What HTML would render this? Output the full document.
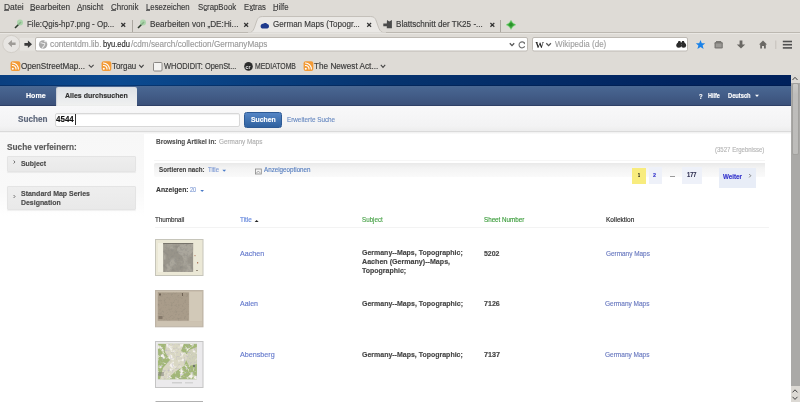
<!DOCTYPE html>
<html><head><meta charset="utf-8">
<style>
*{margin:0;padding:0;box-sizing:border-box}
html,body{width:800px;height:402px;overflow:hidden;background:#fff;font-family:"Liberation Sans",sans-serif}
.a{position:absolute}
#w{position:absolute;left:0;top:0;width:800px;height:402px;filter:blur(0.3px)}
.t{position:absolute;white-space:nowrap;line-height:1;transform-origin:0 0;-webkit-text-stroke:0.15px currentColor}
</style></head><body><div id="w">
<!-- chrome background -->
<div class="a" style="left:0;top:0;width:800px;height:75px;background:#dedbd6"></div>
<!-- accel underlines --><div class="a" style="left:4px;top:10.4px;width:4.5px;height:0.8px;background:#666"></div><div class="a" style="left:30px;top:10.4px;width:4.5px;height:0.8px;background:#666"></div><div class="a" style="left:77px;top:10.4px;width:4.5px;height:0.8px;background:#666"></div><div class="a" style="left:111px;top:10.4px;width:4.5px;height:0.8px;background:#666"></div><div class="a" style="left:146px;top:10.4px;width:3.5px;height:0.8px;background:#666"></div><div class="a" style="left:203.5px;top:10.4px;width:3.0px;height:0.8px;background:#666"></div><div class="a" style="left:250px;top:10.4px;width:3.0px;height:0.8px;background:#666"></div><div class="a" style="left:273px;top:10.4px;width:4.0px;height:0.8px;background:#666"></div>
<!-- tab strip bottom line -->
<div class="a" style="left:0;top:32px;width:800px;height:1px;background:#bcb8b1"></div>
<div class="a" style="left:0;top:33px;width:800px;height:1px;background:#e9e7e3"></div>
<!-- active tab -->
<svg class="a" style="left:248px;top:15px" width="138" height="19" viewBox="0 0 138 19">
  <path d="M0 18 C5 18 6 14 8 8 C10 2 11 1.5 16 1.5 L121 1.5 C126 1.5 127 2 129 8 C131 14 132 18 138 18 Z" fill="#eae8e5" stroke="#c4c0ba" stroke-width="1"/>
  <rect x="0" y="17.5" width="138" height="1.5" fill="#e6e4e0"/>
</svg>
<!-- tab separators -->
<div class="a" style="left:132px;top:20px;width:1px;height:12px;background:#aaa69f"></div>
<div class="a" style="left:500px;top:20px;width:1px;height:12px;background:#aaa69f"></div>
<!-- close x -->
<svg class="a" style="left:0;top:0" width="520" height="32">
  <g stroke="#333" stroke-width="1.2" stroke-linecap="butt">
    <path d="M121.3 23 L125.2 26.8 M125.2 23 L121.3 26.8"/>
    <path d="M244.2 23 L248.1 26.8 M248.1 23 L244.2 26.8"/>
    <path d="M367.2 23 L371.1 26.8 M371.1 23 L367.2 26.8"/>
    <path d="M490.4 23 L494.3 26.8 M494.3 23 L490.4 26.8"/>
  </g>
  <!-- tab icons -->
  <g>
    <path d="M15 28 L21 22" stroke="#2d3b2d" stroke-width="1.6"/>
    <circle cx="20" cy="22.5" r="3" fill="#9fd3a0" opacity="0.8"/>
    <path d="M138 28 L144 22" stroke="#2d3b2d" stroke-width="1.6"/>
    <circle cx="143" cy="22.5" r="3" fill="#9fd3a0" opacity="0.8"/>
    <path d="M260.6 26.2 C260.6 24.6 261.8 23.6 263.2 23.8 C264 22.6 266.4 22.6 267.2 24 C268.4 24.2 269.1 25.2 269 26.4 C268.9 27.8 267.8 28.5 266.4 28.5 L263 28.5 C261.6 28.5 260.6 27.6 260.6 26.2 Z" fill="#1e3a8c"/>
    <path d="M387 20 L389.3 21.6 L391.9 20 L391.9 28.2 L386.8 28.2 L386.8 26.2 L383.3 26.2 L383.3 23.6 L386.8 23.6 Z" fill="#4a4a4a"/>
    <path d="M511 20.3 L512.9 23 L515.9 24.8 L512.9 26.6 L511 29.4 L509.1 26.6 L506.1 24.8 L509.1 23 Z" fill="#3fae3f" stroke="#8fdc8f" stroke-width="0.6"/><circle cx="511" cy="24.8" r="1.8" fill="#2c8f2c"/>
  </g>
</svg>
<!-- nav toolbar -->
<svg class="a" style="left:0;top:32px" width="800" height="24">
  <circle cx="11.3" cy="12" r="8.6" fill="#e7e5e2" stroke="#d2cec8" stroke-width="1"/>
  <path d="M8 11.6 L11.9 8.1 L11.9 10.4 L15.6 10.4 L15.6 12.9 L11.9 12.9 L11.9 15.2 Z" fill="#9e9b97"/>
  <rect x="20" y="6" width="16" height="12.6" fill="#e6e4e0"/>
  <path d="M24.4 10.9 L27.9 10.9 L27.9 8.6 L32 12.3 L27.9 16 L27.9 13.8 L24.4 13.8 Z" fill="#3a3a3a"/>
  <rect x="35.5" y="5.5" width="492" height="13.5" rx="1.5" fill="#fff" stroke="#bdb9b3"/>
  <circle cx="43.1" cy="12.5" r="4.2" fill="#a9a9a9"/>
  <path d="M40.5 11 C42 10 43 12 44.5 11.5 C45.5 12.5 44 14 43 15 L42 16.5 M44 9 L46.5 10" stroke="#e8e8e8" stroke-width="1.1" fill="none"/>
  <path d="M509.8 11.2 L512 13.6 L514.2 11.2" stroke="#555" stroke-width="1.3" fill="none"/>
  <path d="M524.6 11.3 A3 3 0 1 0 524.7 14.3" stroke="#707070" stroke-width="1.1" fill="none"/><path d="M522.6 10.2 L525 10.4 L525 12.6 Z" fill="#707070"/>
  <rect x="532.5" y="5.5" width="155" height="13.5" rx="1.5" fill="#fff" stroke="#bdb9b3"/>
  <text x="535.3" y="15.8" font-family="Liberation Serif" font-size="8.6" font-weight="bold" fill="#2a2a2a" transform="translate(535.3 0) scale(1.02 1) translate(-535.3 0)">W</text>
  <path d="M546.3 11.2 L548.6 13.6 L550.9 11.2" stroke="#555" stroke-width="1.3" fill="none"/>
  <circle cx="678.8" cy="13.2" r="2.5" fill="#2b2b2b"/><circle cx="683.6" cy="13.2" r="2.5" fill="#2b2b2b"/><path d="M677.3 12 L678.5 9 L680.3 9 L680.8 10.5 L681.6 10.5 L682.1 9 L683.9 9 L685.1 12 Z" fill="#2b2b2b"/>
  <path d="M700.5 8 L701.8 11.2 L705.2 11.3 L702.6 13.4 L703.6 16.9 L700.5 14.9 L697.4 16.9 L698.4 13.4 L695.8 11.3 L699.2 11.2 Z" fill="#1a82e8"/>
  <rect x="714.5" y="10" width="8.3" height="6.5" rx="1.2" fill="#7a7874"/>
  <rect x="716" y="9" width="5.2" height="2" fill="#7a7874"/>
  <rect x="715.8" y="11.5" width="5.8" height="3.8" fill="#9b9995"/>
  <path d="M739.6 8.5 L742.4 8.5 L742.4 12.5 L745.2 12.5 L741 16.6 L736.8 12.5 L739.6 12.5 Z" fill="#6a6864"/>
  <path d="M759 12.6 L763 8.6 L767 12.6 L765.8 12.6 L765.8 16.5 L764 16.5 L764 14 L762 14 L762 16.5 L760.2 16.5 L760.2 12.6 Z" fill="#6a6864"/>
  <rect x="775.3" y="8.5" width="1" height="8.5" fill="#c5c1bb"/>
  <rect x="782.8" y="8.7" width="9.2" height="1.6" fill="#505050"/>
  <rect x="782.8" y="11.9" width="9.2" height="1.6" fill="#505050"/>
  <rect x="782.8" y="15.1" width="9.2" height="1.6" fill="#505050"/>
</svg>
<!-- bookmarks toolbar -->
<svg class="a" style="left:0;top:56px" width="400" height="19">
  <g id="rss">
    <rect x="10.6" y="5.3" width="9.7" height="9.7" rx="2" fill="#f39a35"/>
    <circle cx="12.8" cy="12.8" r="1" fill="#fff"/>
    <path d="M12 9.5 A3.5 3.5 0 0 1 16 13.5 M12 7 A6 6 0 0 1 18.4 13.5" stroke="#fff" stroke-width="1.1" fill="none"/>
  </g>
  <use href="#rss" x="91"/>
  <use href="#rss" x="293"/>
  <path d="M88.8 8.8 L91.2 11.3 L93.6 8.8" stroke="#444" stroke-width="1.1" fill="none"/>
  <path d="M139.2 8.8 L141.4 11.3 L143.6 8.8" stroke="#444" stroke-width="1.1" fill="none"/>
  <path d="M380.8 8.8 L383 11.3 L385.2 8.8" stroke="#444" stroke-width="1.1" fill="none"/>
  <rect x="153.5" y="6.5" width="8.5" height="8.5" rx="1" fill="#f4f3f1" stroke="#8a8784"/>
  <circle cx="248.5" cy="10.4" r="4.3" fill="#2c2c2c"/>
  <text x="245.6" y="12.5" font-family="Liberation Sans" font-size="5.2" font-weight="bold" fill="#e8e8e8">cr</text>
</svg>
<!-- page -->
<div class="a" style="left:0;top:75px;width:791px;height:327px;background:#fff"></div>
<div class="a" style="left:0;top:75px;width:791px;height:11px;background:linear-gradient(90deg,#0a3f80 0%,#0b4a90 15%,#06336e 50%,#012460 85%,#00215c 100%)"></div>
<div class="a" style="left:0;top:85px;width:791px;height:1px;background:rgba(0,20,60,0.35)"></div>
<div class="a" style="left:0;top:86px;width:791px;height:20px;background:linear-gradient(#4a6893,#425c87 50%,#3a4f78)"></div>
<div class="a" style="left:0;top:105px;width:791px;height:1px;background:#2f4066"></div>
<!-- search strip -->
<div class="a" style="left:0;top:106px;width:791px;height:25px;background:linear-gradient(#f8f8f9 0%,#f3f3f4 80%,#ededed 100%)"></div>
<div class="a" style="left:0;top:131px;width:791px;height:1px;background:#dadada"></div>
<div class="a" style="left:0;top:132px;width:791px;height:2px;background:linear-gradient(#efefef,#fcfcfc)"></div>
<!-- active nav tab -->
<div class="a" style="left:56.3px;top:87.4px;width:80.7px;height:19px;background:linear-gradient(#dde1e6,#e9ebed 60%,#f0f1f0);border-radius:2px 2px 0 0;box-shadow:inset 1px 0 1px rgba(120,130,150,0.25)"></div>
<!-- input -->
<div class="a" style="left:54.7px;top:112.7px;width:185px;height:14.5px;background:#fff;border:1px solid #d8d8d8;border-radius:2px;box-shadow:inset 0 1px 1px rgba(0,0,0,0.06)"></div>
<div class="a" style="left:75px;top:114.3px;width:0.8px;height:10.7px;background:#333"></div>
<!-- button -->
<div class="a" style="left:244px;top:112.2px;width:38.2px;height:15.5px;background:linear-gradient(#5485c5,#2f619f);border:1px solid #2d5a95;border-radius:2.5px"></div>
<!-- sidebar -->
<div class="a" style="left:0;top:134px;width:144px;height:82px;background:linear-gradient(#f7f7f7,#f9f9f9 70%,#fff)"></div>
<div class="a" style="left:6.7px;top:156px;width:129px;height:16px;background:linear-gradient(#eeeeee,#e9e9e9);border:1px solid #e4e4e4;border-radius:1px;box-shadow:0 1px 1px rgba(0,0,0,0.06)"></div>
<div class="a" style="left:6.7px;top:185.7px;width:129px;height:24.6px;background:linear-gradient(#eeeeee,#e9e9e9);border:1px solid #e4e4e4;border-radius:1px;box-shadow:0 1px 1px rgba(0,0,0,0.06)"></div>
<svg class="a" style="left:0;top:150px" width="30" height="60">
  <path d="M13.6 10.5 L15 12 L13.6 13.5" stroke="#666" stroke-width="0.9" fill="none"/>
  <path d="M13.6 45 L15 46.5 L13.6 48" stroke="#666" stroke-width="0.9" fill="none"/>
</svg>
<!-- sort bar -->
<div class="a" style="left:154px;top:159.6px;width:611px;height:1px;background:#f6f6f6"></div>
<div class="a" style="left:154px;top:162.5px;width:611px;height:14px;background:linear-gradient(#e9e9e9,#f3f3f3 35%,#fafafa);border-radius:2px 0 0 2px"></div>
<svg class="a" style="left:0;top:160px" width="800" height="40">
  <path d="M222.3 9.7 L226.1 9.7 L224.2 11.8 Z" fill="#4a7bc8"/>
  <path d="M200.3 30 L204 30 L202.15 32 Z" fill="#4a7bc8"/>
  <rect x="255.5" y="9" width="5.8" height="5" fill="#f4f4f4" stroke="#888" stroke-width="0.8"/>
  <path d="M256.5 13 L258.3 11 L260.3 13" stroke="#888" stroke-width="0.7" fill="none"/>
</svg>
<!-- pager -->
<div class="a" style="left:632px;top:167.7px;width:13.8px;height:16px;background:#f8ec7e"></div>
<div class="a" style="left:648.6px;top:167.4px;width:13.2px;height:16.2px;background:#eef1f9"></div>
<div class="a" style="left:682px;top:167px;width:20px;height:16.6px;background:#eef1f9"></div>
<div class="a" style="left:718.7px;top:167.9px;width:37.3px;height:19.8px;background:#e8edf7"></div>
<div class="a" style="left:669.7px;top:176.2px;width:5.3px;height:0.8px;background:#9a9a9a"></div>
<svg class="a" style="left:740px;top:170px" width="20" height="12">
  <path d="M9.2 4 L10.8 5.7 L9.2 7.4" stroke="#777" stroke-width="0.9" fill="none"/>
</svg>
<!-- table header -->
<svg class="a" style="left:250px;top:215px" width="12" height="10">
  <path d="M4.6 7 L8.6 7 L6.6 4.9 Z" fill="#222"/>
</svg>
<div class="a" style="left:155px;top:226.5px;width:614px;height:1px;background:#f3f3f3"></div>
<svg class="a" style="left:750px;top:90px" width="12" height="10"><path d="M5 4.8 L9 4.8 L7 6.9 Z" fill="#fff"/></svg>
<!-- thumbnails -->
<svg class="a" style="left:150px;top:236px" width="60" height="166" viewBox="150 236 60 166">
  <defs>
    <filter id="n1" x="0" y="0" width="100%" height="100%">
      <feTurbulence type="fractalNoise" baseFrequency="0.35" numOctaves="2" seed="3"/>
      <feColorMatrix values="0 0 0 0 0.25  0 0 0 0 0.24  0 0 0 0 0.22  1.6 0 0 0 -0.75"/>
      <feComposite in2="SourceGraphic" operator="in"/>
    </filter>
    <filter id="n2" x="0" y="0" width="100%" height="100%">
      <feTurbulence type="fractalNoise" baseFrequency="0.45" numOctaves="2" seed="7"/>
      <feColorMatrix values="0 0 0 0 0.3  0 0 0 0 0.26  0 0 0 0 0.2  1.8 0 0 0 -0.9"/>
      <feComposite in2="SourceGraphic" operator="in"/>
    </filter>
    <filter id="n3" x="0" y="0" width="100%" height="100%">
      <feTurbulence type="fractalNoise" baseFrequency="0.5" numOctaves="2" seed="11"/>
      <feColorMatrix values="0 0 0 0 0.45  0 0 0 0 0.42  0 0 0 0 0.55  1.8 0 0 0 -0.95"/>
      <feComposite in2="SourceGraphic" operator="in"/>
    </filter>
    <filter id="g3" x="0" y="0" width="100%" height="100%">
      <feTurbulence type="fractalNoise" baseFrequency="0.2" numOctaves="3" seed="5"/>
      <feColorMatrix values="0 0 0 0 0.9  0 0 0 0 0.88  0 0 0 0 0.84  5 0 0 0 -2.6"/>
      <feComposite in2="SourceGraphic" operator="in"/>
    </filter>
    <filter id="g1" x="0" y="0" width="100%" height="100%">
      <feTurbulence type="fractalNoise" baseFrequency="0.12" numOctaves="3" seed="9"/>
      <feColorMatrix values="0 0 0 0 0.40  0 0 0 0 0.38  0 0 0 0 0.33  4 0 0 0 -1.7"/>
      <feComposite in2="SourceGraphic" operator="in"/>
    </filter>
  </defs>
  <!-- thumb 1 -->
  <rect x="155.5" y="239.5" width="47.5" height="36" fill="#ebe8d6" stroke="#c6c5ba"/>
  <path d="M158 243 L163 243 L163 272 L158 272 Z" fill="#f2f0e2"/>
  <rect x="163.2" y="243" width="29.9" height="28.9" fill="#98948a"/>
  <ellipse cx="185" cy="250" rx="8" ry="6" fill="#b3afa5" opacity="0.7"/>
  <rect x="163.2" y="243" width="29.9" height="28.9" fill="#000" filter="url(#g1)"/>
  <rect x="163.2" y="243" width="29.9" height="28.9" fill="#000" filter="url(#n1)"/>
  <rect x="163.2" y="243" width="29.9" height="0.8" fill="#6f6b63"/>
  <rect x="194.5" y="255" width="1" height="1.2" fill="#b07a60"/>
  <rect x="197" y="262" width="1.2" height="1.5" fill="#b07a60"/>
  <rect x="196" y="270" width="2" height="1" fill="#9a9080"/>
  <!-- thumb 2 -->
  <rect x="155.5" y="290.5" width="47.5" height="36.3" fill="#cabfae" stroke="#bdb3a5"/>
  <rect x="189.5" y="292" width="12.5" height="29" fill="#d2c9b8"/>
  <rect x="157.8" y="292.4" width="31.1" height="28.3" fill="#a99c8a"/>
  <rect x="157.8" y="292.4" width="31.1" height="28.3" fill="#000" filter="url(#n2)"/>
  <rect x="159" y="293.5" width="2" height="2" fill="#6f6355"/>
  <rect x="182" y="293" width="1" height="3" fill="#6f6355"/>
  <rect x="158.5" y="316" width="4" height="3" fill="#85796a"/>
  <rect x="157" y="321.5" width="45" height="4.5" fill="#cdc3b2"/>
  <!-- thumb 3 -->
  <rect x="155.5" y="341.5" width="47.5" height="46" fill="#ebeaec" stroke="#c4c4c4"/>
  <rect x="157.9" y="343.8" width="39" height="35.5" fill="#a2b777"/>
  <path d="M166 343.8 L184 343.8 L181 351 L188 355 L184 366 L175 372 L167 379.3 L160 379.3 L163 368 L170 360 L165 352 Z" fill="#e3ddd0" opacity="0.85"/>
  <path d="M189 350 L196.9 347 L196.9 364 L189 366 L185 358 Z" fill="#dcd7cb" opacity="0.8"/>
  <rect x="157.9" y="343.8" width="39" height="35.5" fill="#000" filter="url(#g3)"/>
  <rect x="157.9" y="343.8" width="39" height="35.5" fill="#000" filter="url(#n3)"/>
  <rect x="158" y="372" width="6" height="4" fill="#7a7a72" opacity="0.5"/>
  <rect x="193" y="365" width="2" height="2" fill="#5a5a6a" opacity="0.7"/>
  <rect x="172" y="382" width="10" height="1.5" fill="#cfcfcf"/>
  <rect x="185" y="382" width="8" height="1.5" fill="#d4d4d4"/>
  <rect x="155.5" y="401" width="47.5" height="1" fill="#b0b0b0"/>
</svg>
<!-- scrollbar -->
<div class="a" style="left:790.5px;top:75px;width:9.5px;height:327px;background:#dcd9d4"></div>
<div class="a" style="left:791px;top:83px;width:9px;height:302.6px;background:#aaa9a7"></div>
<div class="a" style="left:791.5px;top:83.2px;width:7.5px;height:72px;background:linear-gradient(#cac9c6,#bebdbb 15%,#bdbcba);border:1px solid #a2a19e;border-radius:2px"></div>
<svg class="a" style="left:788px;top:75px" width="12" height="327">
  <path d="M4.5 5 L7 2.3 L9.5 5" stroke="#444" stroke-width="1" fill="none"/>
  <path d="M4.5 317.4 L7 314.8 L9.5 317.4" stroke="#444" stroke-width="1" fill="none"/>
  <path d="M4.5 321.8 L7 324.4 L9.5 321.8" stroke="#444" stroke-width="1" fill="none"/>
</svg>

<div class="t" style="left:3.75px;top:3.00px;font-size:8.3px;font-weight:normal;color:#3b3b3b;transform:scaleX(1.0184);">Datei</div><div class="t" style="left:30.00px;top:3.00px;font-size:8.3px;font-weight:normal;color:#3b3b3b;transform:scaleX(1.0000);">Bearbeiten</div><div class="t" style="left:77.00px;top:3.00px;font-size:8.3px;font-weight:normal;color:#3b3b3b;transform:scaleX(0.9643);">Ansicht</div><div class="t" style="left:111.00px;top:3.00px;font-size:8.3px;font-weight:normal;color:#3b3b3b;transform:scaleX(0.9569);">Chronik</div><div class="t" style="left:146.00px;top:3.00px;font-size:8.3px;font-weight:normal;color:#3b3b3b;transform:scaleX(0.9362);">Lesezeichen</div><div class="t" style="left:197.50px;top:3.00px;font-size:8.3px;font-weight:normal;color:#3b3b3b;transform:scaleX(0.9390);">ScrapBook</div><div class="t" style="left:243.75px;top:3.00px;font-size:8.3px;font-weight:normal;color:#3b3b3b;transform:scaleX(0.9271);">Extras</div><div class="t" style="left:273.00px;top:3.00px;font-size:8.3px;font-weight:normal;color:#3b3b3b;transform:scaleX(0.9412);">Hilfe</div><div class="t" style="left:27.00px;top:20.00px;font-size:8.3px;font-weight:normal;color:#3a3a3a;transform:scaleX(0.9604);">File:Qgis-hp7.png - Op...</div><div class="t" style="left:150.00px;top:20.00px;font-size:8.3px;font-weight:normal;color:#3a3a3a;transform:scaleX(0.9888);">Bearbeiten von „DE:Hi...</div><div class="t" style="left:273.00px;top:20.00px;font-size:8.3px;font-weight:normal;color:#3a3a3a;transform:scaleX(0.9708);">German Maps (Topogr...</div><div class="t" style="left:396.00px;top:20.00px;font-size:8.3px;font-weight:normal;color:#3a3a3a;transform:scaleX(0.9775);">Blattschnitt der TK25 -...</div><div class="t" style="left:50.00px;top:40.00px;font-size:9px;font-weight:normal;color:#999999;transform:scaleX(0.9196);">contentdm.lib.</div><div class="t" style="left:103.20px;top:40.00px;font-size:9px;font-weight:normal;color:#2a2a2a;transform:scaleX(0.8375);">byu.edu</div><div class="t" style="left:130.75px;top:40.00px;font-size:9px;font-weight:normal;color:#9a9a9a;transform:scaleX(0.9056);">/cdm/search/collection/GermanyMaps</div><div class="t" style="left:555.00px;top:40.00px;font-size:9px;font-weight:normal;color:#a0a0a0;transform:scaleX(0.8914);">Wikipedia (de)</div><div class="t" style="left:21.00px;top:62.00px;font-size:8.4px;font-weight:normal;color:#383838;transform:scaleX(0.9697);">OpenStreetMap...</div><div class="t" style="left:112.40px;top:62.00px;font-size:8.4px;font-weight:normal;color:#383838;transform:scaleX(0.9462);">Torgau</div><div class="t" style="left:164.00px;top:62.00px;font-size:8.4px;font-weight:normal;color:#383838;transform:scaleX(0.8889);">WHODIDIT: OpenSt...</div><div class="t" style="left:255.00px;top:62.00px;font-size:8.4px;font-weight:normal;color:#383838;transform:scaleX(0.8200);">MEDIATOMB</div><div class="t" style="left:314.40px;top:62.00px;font-size:8.4px;font-weight:normal;color:#383838;transform:scaleX(0.9785);">The Newest Act...</div><div class="t" style="left:26.00px;top:92.00px;font-size:7.8px;font-weight:bold;color:#ffffff;transform:scaleX(0.9091);">Home</div><div class="t" style="left:64.70px;top:92.00px;font-size:7.8px;font-weight:bold;color:#2f2f2f;transform:scaleX(0.8986);">Alles durchsuchen</div><div class="t" style="left:698.70px;top:93.00px;font-size:7.8px;font-weight:bold;color:#ffffff;transform:scaleX(0.7600);">?</div><div class="t" style="left:707.70px;top:92.00px;font-size:7.8px;font-weight:bold;color:#ffffff;transform:scaleX(0.7059);">Hilfe</div><div class="t" style="left:727.70px;top:92.00px;font-size:7.8px;font-weight:bold;color:#ffffff;transform:scaleX(0.7355);">Deutsch</div><div class="t" style="left:17.70px;top:115.00px;font-size:8.6px;font-weight:bold;color:#5b6579;transform:scaleX(0.9516);">Suchen</div><div class="t" style="left:56.25px;top:115.00px;font-size:9.2px;font-weight:bold;color:#111111;transform:scaleX(0.8690);">4544</div><div class="t" style="left:250.70px;top:116.00px;font-size:7.6px;font-weight:bold;color:#ffffff;transform:scaleX(0.8964);">Suchen</div><div class="t" style="left:286.70px;top:116.00px;font-size:7.4px;font-weight:normal;color:#6b8cc2;transform:scaleX(0.8544);">Erweiterte Suche</div><div class="t" style="left:7.40px;top:143.00px;font-size:9px;font-weight:bold;color:#5a5a5a;transform:scaleX(0.9184);">Suche verfeinern:</div><div class="t" style="left:20.60px;top:160.00px;font-size:7.4px;font-weight:bold;color:#4a4a4a;transform:scaleX(0.9370);">Subject</div><div class="t" style="left:20.60px;top:190.00px;font-size:7.4px;font-weight:bold;color:#4a4a4a;transform:scaleX(0.9438);">Standard Map Series</div><div class="t" style="left:20.60px;top:199.00px;font-size:7.4px;font-weight:bold;color:#4a4a4a;transform:scaleX(0.9381);">Designation</div><div class="t" style="left:155.60px;top:138.00px;font-size:7px;font-weight:bold;color:#555555;transform:scaleX(0.9182);">Browsing Artikel in:</div><div class="t" style="left:218.80px;top:138.00px;font-size:7px;font-weight:normal;color:#b0b0b0;transform:scaleX(0.9083);">Germany Maps</div><div class="t" style="left:714.70px;top:146.00px;font-size:7px;font-weight:normal;color:#b5b5b5;transform:scaleX(0.8632);">(3527 Ergebnisse)</div><div class="t" style="left:158.70px;top:166.00px;font-size:7px;font-weight:bold;color:#454545;transform:scaleX(0.8882);">Sortieren nach:</div><div class="t" style="left:208.20px;top:166.00px;font-size:7px;font-weight:normal;color:#7e9ad4;transform:scaleX(0.8462);">Title</div><div class="t" style="left:264.00px;top:166.00px;font-size:7px;font-weight:normal;color:#5a80c0;transform:scaleX(0.8923);">Anzeigeoptionen</div><div class="t" style="left:155.60px;top:186.00px;font-size:8px;font-weight:bold;color:#3a3a3a;transform:scaleX(0.8526);">Anzeigen:</div><div class="t" style="left:190.40px;top:186.00px;font-size:7.5px;font-weight:normal;color:#7e9ad4;transform:scaleX(0.7333);">20</div><div class="t" style="left:637.60px;top:172.00px;font-size:6.2px;font-weight:bold;color:#111111;transform:scaleX(0.6000);">1</div><div class="t" style="left:653.40px;top:172.00px;font-size:6.2px;font-weight:bold;color:#3333cc;transform:scaleX(0.8750);">2</div><div class="t" style="left:687.20px;top:172.00px;font-size:6.3px;font-weight:bold;color:#333355;transform:scaleX(0.9091);">177</div><div class="t" style="left:723.40px;top:174.00px;font-size:6.8px;font-weight:bold;color:#3535cc;transform:scaleX(0.9190);">Weiter</div><div class="t" style="left:155.30px;top:216.00px;font-size:7px;font-weight:normal;color:#333333;transform:scaleX(0.9000);">Thumbnail</div><div class="t" style="left:240.20px;top:216.00px;font-size:7px;font-weight:normal;color:#6688dd;transform:scaleX(0.9077);">Title</div><div class="t" style="left:361.90px;top:216.00px;font-size:7px;font-weight:normal;color:#4aa34a;transform:scaleX(0.8917);">Subject</div><div class="t" style="left:484.00px;top:216.00px;font-size:7px;font-weight:normal;color:#3a9c3a;transform:scaleX(0.8911);">Sheet Number</div><div class="t" style="left:605.60px;top:216.00px;font-size:7px;font-weight:normal;color:#2a2a2a;transform:scaleX(0.9323);">Kollektion</div><div class="t" style="left:240.20px;top:250.00px;font-size:8px;font-weight:normal;color:#6479cc;transform:scaleX(0.8889);">Aachen</div><div class="t" style="left:362.20px;top:249.00px;font-size:7.2px;font-weight:bold;color:#454545;transform:scaleX(0.9712);">Germany--Maps, Topographic;</div><div class="t" style="left:362.20px;top:258.00px;font-size:7.2px;font-weight:bold;color:#454545;transform:scaleX(0.9888);">Aachen (Germany)--Maps,</div><div class="t" style="left:362.20px;top:267.00px;font-size:7.2px;font-weight:bold;color:#454545;transform:scaleX(0.9733);">Topographic;</div><div class="t" style="left:484.00px;top:250.00px;font-size:7.2px;font-weight:bold;color:#454545;transform:scaleX(0.9688);">5202</div><div class="t" style="left:605.60px;top:250.00px;font-size:7px;font-weight:normal;color:#6a7ac0;transform:scaleX(0.9167);">Germany Maps</div><div class="t" style="left:240.20px;top:300.00px;font-size:8px;font-weight:normal;color:#6479cc;transform:scaleX(0.8762);">Aalen</div><div class="t" style="left:362.10px;top:300.00px;font-size:7.2px;font-weight:bold;color:#454545;transform:scaleX(0.9740);">Germany--Maps, Topographic;</div><div class="t" style="left:484.00px;top:300.00px;font-size:7.2px;font-weight:bold;color:#454545;transform:scaleX(0.9875);">7126</div><div class="t" style="left:605.00px;top:300.00px;font-size:7px;font-weight:normal;color:#6a7ac0;transform:scaleX(0.9292);">Germany Maps</div><div class="t" style="left:240.20px;top:351.00px;font-size:8px;font-weight:normal;color:#6479cc;transform:scaleX(0.8974);">Abensberg</div><div class="t" style="left:362.20px;top:351.00px;font-size:7.2px;font-weight:bold;color:#454545;transform:scaleX(0.9721);">Germany--Maps, Topographic;</div><div class="t" style="left:484.00px;top:351.00px;font-size:7.2px;font-weight:bold;color:#454545;transform:scaleX(1.0000);">7137</div><div class="t" style="left:605.00px;top:351.00px;font-size:7px;font-weight:normal;color:#6a7ac0;transform:scaleX(0.9292);">Germany Maps</div>
</div></body></html>
